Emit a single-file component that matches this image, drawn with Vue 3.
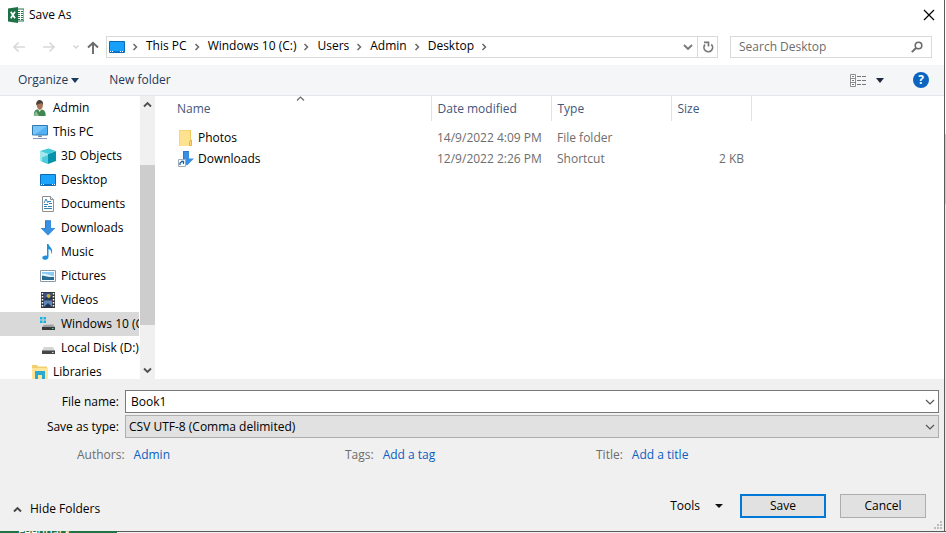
<script setup>
import { ref } from 'vue'

const crumbs = ['This PC', 'Windows 10 (C:)', 'Users', 'Admin', 'Desktop']

const tree = [
  { label: 'Admin', icon: 'user', root: true },
  { label: 'This PC', icon: 'pc', root: true },
  { label: '3D Objects', icon: 'cube' },
  { label: 'Desktop', icon: 'desktop' },
  { label: 'Documents', icon: 'document' },
  { label: 'Downloads', icon: 'download' },
  { label: 'Music', icon: 'music' },
  { label: 'Pictures', icon: 'picture' },
  { label: 'Videos', icon: 'video' },
  { label: 'Windows 10 (C:)', icon: 'system' },
  { label: 'Local Disk (D:)', icon: 'disk' },
  { label: 'Libraries', icon: 'library', root: true },
]
const selected = ref('Windows 10 (C:)')

const files = [
  { name: 'Photos', icon: 'folder', date: '14/9/2022 4:09 PM', type: 'File folder', size: '' },
  { name: 'Downloads', icon: 'shortcut', date: '12/9/2022 2:26 PM', type: 'Shortcut', size: '2 KB' },
]

const search = ref('')
const fileName = ref('Book1')
const fileType = ref('csv')
</script>

<template>
  <div class="screen">
    <main class="dialog">
      <header class="titlebar">
        <svg class="app-icon" width="16" height="16" viewBox="0 0 16 16">
          <path d="M9 2h7v12H9z" fill="#fff" stroke="#217346" />
          <path d="M10 4.500h2M13 4.500h2M10 6.500h2M13 6.500h2M10 8.500h2M13 8.500h2M10 10.500h2M13 10.500h2M10 12.500h2M13 12.500h2" stroke="#217346" />
          <path d="M0 1.500 10 0v16L0 14.500z" fill="#1e7145" />
          <path d="M2.800 4.800 7 11.300M7 4.600 2.800 11.300" stroke="#fff" stroke-width="1.700" />
        </svg>
        <h1>Save As</h1>
        <button class="close" aria-label="Close">
          <svg width="12" height="12" viewBox="0 0 12 12"><path d="M1 1l10 10M11 1 1 11" stroke="#000" stroke-width="1.200" /></svg>
        </button>
      </header>

      <div class="navbar">
        <div class="history">
          <button aria-label="Back" disabled>
            <svg width="14" height="12" viewBox="0 0 14 12"><path d="M13 6H2M6.500 1.500 2 6l4.500 4.500" fill="none" stroke="#d9d9d9" stroke-width="1.700" /></svg>
          </button>
          <button aria-label="Forward" disabled>
            <svg width="14" height="12" viewBox="0 0 14 12"><path d="M1 6h11M7.500 1.500 12 6l-4.500 4.500" fill="none" stroke="#d9d9d9" stroke-width="1.700" /></svg>
          </button>
          <button class="recent" aria-label="Recent locations" disabled>
            <svg width="8" height="6" viewBox="0 0 8 6"><path d="M1.500 1.500 4 4l2.500-2.500" fill="none" stroke="#d4d4d4" stroke-width="1.500" /></svg>
          </button>
          <button class="up" aria-label="Up">
            <svg width="12" height="13" viewBox="0 0 12 13"><path d="M6 13V2M1 6.500 6 1.700l5 4.800" fill="none" stroke="#6a6a6a" stroke-width="1.900" /></svg>
          </button>
        </div>
        <nav class="address" aria-label="Address">
          <svg class="place" width="16" height="12" viewBox="0 0 16 12">
            <path d="M.5.5h15v11H.5z" fill="#18a1fb" stroke="#0a6cb9" />
            <path d="M1 10.500h14" stroke="#0b79cf" />
            <path d="M1 10.500h1M3 10.500h1M11 10.500h1M13 10.500h1" stroke="#fff" />
          </svg>
          <svg class="sep" width="6" height="8" viewBox="0 0 6 8"><path d="M1.500 1 4.500 4l-3 3" fill="none" stroke="#6a6a6a" stroke-width="1.500" /></svg>
          <template v-for="c in crumbs" :key="c">
            <button class="crumb">{{ c }}</button>
            <svg class="sep" width="6" height="8" viewBox="0 0 6 8"><path d="M1.500 1 4.500 4l-3 3" fill="none" stroke="#6a6a6a" stroke-width="1.500" /></svg>
          </template>
          <button class="expand" aria-label="Previous locations">
            <svg width="10" height="7" viewBox="0 0 10 7"><path d="M1 1l4 4 4-4" fill="none" stroke="#777" stroke-width="1.900" /></svg>
          </button>
          <button class="refresh" aria-label="Refresh">
            <svg width="12" height="12" viewBox="0 0 12 12">
              <path d="M9.300 3.300A4.300 4.300 0 1 1 3 3.600" fill="none" stroke="#777" stroke-width="1.700" />
              <path d="M2 1.300h4.500v4.200" fill="none" stroke="#777" stroke-width="1.700" />
            </svg>
          </button>
        </nav>
        <label class="search">
          <input v-model="search" type="text" placeholder="Search Desktop" aria-label="Search Desktop" />
          <svg width="12" height="12" viewBox="0 0 12 12">
            <circle cx="7.500" cy="4.500" r="3.300" fill="none" stroke="#6a6a6a" stroke-width="1.600" />
            <path d="M5 7 .8 11.200" stroke="#6a6a6a" stroke-width="1.900" />
          </svg>
        </label>
      </div>

      <div class="toolbar">
        <button class="organize">Organize
          <svg width="8" height="5" viewBox="0 0 8 5"><path d="M0 0h8L4 5z" fill="#1e395b" /></svg>
        </button>
        <button>New folder</button>
        <button class="views" aria-label="Change your view">
          <svg width="17" height="13" viewBox="0 0 17 13">
            <path d="M.5.5h5v12h-5zM.5 4.500h5M.5 8.500h5" fill="#fff" stroke="#8c8c8c" />
            <path d="M2 2.500h2M2 6.500h2M2 10.500h2" stroke="#777" />
            <path d="M7 2.500h4M12 2.500h4M7 6.500h4M12 6.500h4M7 10.500h4M12 10.500h4" stroke="#777" />
          </svg>
          <svg width="8" height="5" viewBox="0 0 8 5"><path d="M0 0h8L4 5z" fill="#1e2a3d" /></svg>
        </button>
        <button class="help" aria-label="Help">?</button>
      </div>

      <div class="browser">
        <ul class="tree">
          <li v-for="n in tree" :key="n.label">
            <button class="node" :class="{ root: n.root, selected: n.label === selected }" @click="selected = n.label">
              <svg width="16" height="16" viewBox="0 0 16 16">
                <template v-if="n.icon === 'user'">
                  <path d="M2 16c-.5-3 .5-6 3-6.500h5c2.500.5 4 3 3.500 6.500z" fill="#3f8651" />
                  <path d="M2 16c0-2 .8-4 2.500-4.800L7 16z" fill="#8db795" />
                  <path d="m6 9 1.500 3L10 9z" fill="#f5e5d8" />
                  <path d="M4.500 3.500C5 .8 10 .5 10.800 3.500c.5 3-.8 6-3 6.300-2.300-.3-3.300-3.500-3.300-6.300z" fill="#a97358" />
                  <path d="M4.300 5C4 1.500 6 0 7.800.1c2.500.1 3.500 2 3.200 4.700L9.500 3z" fill="#4b4038" />
                </template>
                <template v-else-if="n.icon === 'pc'">
                  <path d="M.5 1.500h15v9.500H.5z" fill="#50b2f5" stroke="#3178af" />
                  <path d="M1 2h14L3 10.500H1z" fill="#78c5f8" />
                  <path d="M6 11.500h4v1.500H6z" fill="#7c8da1" />
                  <path d="M1 14.500h14" stroke="#8996bb" />
                </template>
                <template v-else-if="n.icon === 'cube'">
                  <path d="M0 3 8 6v10L0 13z" fill="#a4e7ec" />
                  <path d="M8 6l8-3V13l-8 3z" fill="#0793ac" />
                  <path d="M0 3 8.500.5 16 3 8 6z" fill="#42cbd9" />
                  <path d="M2 9.500 8 7v9l-6-2.300z" fill="#4fcbdc" />
                </template>
                <template v-else-if="n.icon === 'desktop'">
                  <path d="M.5 2.500h15v11H.5z" fill="#1ba4fc" stroke="#0a6cb9" />
                  <path d="M1 12.500h14" stroke="#0b70c0" />
                  <path d="M1 12.500h1M3 12.500h1M12 12.500h1M14 12.500h1" stroke="#fff" />
                </template>
                <template v-else-if="n.icon === 'document'">
                  <path d="M2.500.5h8l3 3v12h-11z" fill="#fff" stroke="#8a8f94" />
                  <path d="M10.500.5v3h3" fill="#e5e5e5" stroke="#8a8f94" />
                  <path d="M4 7 6 3l2 4M8 5.500h3M4 8.500h4M9 7.500h3M4 10.500h3M8 10.500h4M4 12.500h8" fill="none" stroke="#3583b5" />
                </template>
                <template v-else-if="n.icon === 'download'">
                  <path d="M5 .5h6V8h4.500L8 15.500.5 8H5z" fill="#3990e3" />
                  <path d="M5 .5h6v1H6v7H2.500L.5 8H5z" fill="#287bcb" />
                </template>
                <template v-else-if="n.icon === 'music'">
                  <path d="M7 0h1.500c.5 3 4.500 4 3.500 8.500-.3 1-.8 1.500-1 1.500 1-3-.8-4.500-2.500-5V13c0 2-2 3-4 2.800C2 15.500 1.500 13 3.500 12c1.200-.7 2.500-.7 3.500-.3z" fill="#1c8fdd" />
                </template>
                <template v-else-if="n.icon === 'picture'">
                  <path d="M.5 2.500h15v11H.5z" fill="#fff" stroke="#8a9aa8" />
                  <path d="M2 4h12v8H2z" fill="#8cc9f3" />
                  <path d="M2 6c4-1 7 2 12 2v1H2z" fill="#e4f4fd" />
                  <path d="M2 7.500c4 .5 7 2 12 1.500v3H2z" fill="#286a91" />
                </template>
                <template v-else-if="n.icon === 'video'">
                  <path d="M1 0h14v16H1z" fill="#34363a" />
                  <path d="M2.500 1v15M13.500 1v15" stroke="#fff" stroke-width="1.500" stroke-dasharray="1.500" />
                  <path d="M4 1h8v6.500H4z" fill="#394e8a" />
                  <path d="M4 8.500h8V15H4z" fill="#5c86b9" />
                  <circle cx="8.500" cy="4" r="2" fill="#c5b32e" />
                  <path d="M4 7.500 7 5l2 2 3-3v3.500zM4 15l4-4 4 4z" fill="#1e3254" />
                </template>
                <template v-else-if="n.icon === 'system'">
                  <path d="M0 1h2.500v2.500H0zM3.500 1H6v2.500H3.500zM0 4.500h2.500V7H0zM3.500 4.500H6V7H3.500z" fill="#16b3e0" />
                  <path d="m4 9 9-.5 2 2.500H2z" fill="#9da0a2" />
                  <path d="M2 11h13v3H2z" fill="#383b3d" />
                  <path d="M12 12.500h1.500" stroke="#56df79" />
                </template>
                <template v-else-if="n.icon === 'disk'">
                  <path d="M4 7h9l2 4H2z" fill="#d3d5d6" />
                  <path d="M2 10.500h13V14H2z" fill="#444749" />
                  <path d="M12 12.500h1.500" stroke="#d5dfd6" />
                </template>
                <template v-else>
                  <path d="M0 1h5l1 1.500h9V15H0z" fill="#f1cf6e" />
                  <path d="M0 4h16v11H0z" fill="#ffe49a" />
                  <path d="M3 7h10v9h-3v-5H6v5H3z" fill="#29a9cf" />
                </template>
              </svg>
              <span>{{ n.label }}</span>
            </button>
          </li>
        </ul>
        <div class="scrollbar">
          <button aria-label="Scroll up">
            <svg width="9" height="7" viewBox="0 0 9 7"><path d="M1 5.500 4.500 2 8 5.500" fill="none" stroke="#505050" stroke-width="1.900" /></svg>
          </button>
          <div class="track"><div class="thumb"></div></div>
          <button aria-label="Scroll down">
            <svg width="9" height="7" viewBox="0 0 9 7"><path d="M1 1.500 4.500 5 8 1.500" fill="none" stroke="#505050" stroke-width="1.900" /></svg>
          </button>
        </div>
        <section class="files">
          <table>
            <colgroup>
              <col class="c-name" /><col class="c-std" /><col class="c-std" /><col class="c-size" />
            </colgroup>
            <thead>
              <tr>
                <th scope="col">Name
                  <svg class="sort" width="9" height="5" viewBox="0 0 9 5"><path d="M1 4.500 4.500 1 8 4.500" fill="none" stroke="#6a6a6a" stroke-width="1.200" /></svg>
                </th>
                <th scope="col">Date modified</th>
                <th scope="col">Type</th>
                <th scope="col">Size</th>
              </tr>
            </thead>
            <tbody>
              <tr v-for="f in files" :key="f.name">
                <td class="name">
                  <div class="file">
                    <svg width="16" height="16" viewBox="0 0 16 16">
                      <template v-if="f.icon === 'folder'">
                        <path d="M1 0h12v16H1z" fill="#efc85c" />
                        <path d="M1.500.5H12V13l-1 3H1.500z" fill="#ffe290" />
                        <path d="M11.500 11.500 13.500 10v5.500h-2z" fill="#fcd876" stroke="#dfb847" />
                      </template>
                      <template v-else>
                        <path d="M5 0h6v7.500h5L9 14.500 5 11z" fill="#3990e3" />
                        <path d="M5 0h6v1H6v7H5z" fill="#287bcb" />
                        <path d="M.5 8.500h7v7h-7z" fill="#fff" stroke="#9eabb8" />
                        <path d="M2 14V12l2.500-2M3 10.500h2.500V13" fill="none" stroke="#1e669f" stroke-width="1.300" />
                      </template>
                    </svg>
                    {{ f.name }}
                  </div>
                </td>
                <td>{{ f.date }}</td>
                <td>{{ f.type }}</td>
                <td class="size">{{ f.size }}</td>
              </tr>
            </tbody>
          </table>
        </section>
      </div>

      <form class="details" @submit.prevent>
        <div class="field">
          <label for="file-name">File name:</label>
          <div class="combo">
            <input id="file-name" v-model="fileName" type="text" />
            <svg width="10" height="6" viewBox="0 0 10 6"><path d="M1 1l4 4 4-4" fill="none" stroke="#555" stroke-width="1.200" /></svg>
          </div>
        </div>
        <div class="field">
          <label for="file-type">Save as type:</label>
          <div class="combo">
            <select id="file-type" v-model="fileType">
              <option value="csv">CSV UTF-8 (Comma delimited)</option>
            </select>
            <svg width="10" height="6" viewBox="0 0 10 6"><path d="M1 1l4 4 4-4" fill="none" stroke="#555" stroke-width="1.200" /></svg>
          </div>
        </div>
        <dl class="meta">
          <div><dt>Authors:</dt><dd><a href="#authors">Admin</a></dd></div>
          <div><dt>Tags:</dt><dd><a href="#tags">Add a tag</a></dd></div>
          <div><dt>Title:</dt><dd><a href="#title">Add a title</a></dd></div>
        </dl>
        <div class="actions">
          <button type="button" class="hide">
            <svg width="9" height="7" viewBox="0 0 9 7"><path d="M1 5.500 4.500 2 8 5.500" fill="none" stroke="#444" stroke-width="1.900" /></svg>
            Hide Folders
          </button>
          <button type="button" class="tools">Tools
            <svg width="8" height="4" viewBox="0 0 8 4"><path d="M0 0h8L4 4z" fill="#111" /></svg>
          </button>
          <button type="submit" class="push primary">Save</button>
          <button type="button" class="push">Cancel</button>
        </div>
        <svg class="grip" width="9" height="9" viewBox="0 0 9 9">
          <path d="M7 0h2v2H7zM7 3h2v2H7zM4 3h2v2H4zM7 6h2v2H7zM4 6h2v2H4zM1 6h2v2H1z" fill="#bcbcbc" />
        </svg>
      </form>
    </main>
    <div class="behind"><span class="feedback">Feedback</span></div>
  </div>
</template>

<style>
body { background: #fff; }
</style>

<style scoped>
.screen {
  display: flex;
  flex-direction: column;
  height: 100vh;
  min-height: 420px;
  overflow: hidden;
  font-family: "Open Sans", "Noto Sans", sans-serif;
  font-size: 12px;
  line-height: 16px;
  color: #000;
  background: linear-gradient(#fff 134px, #f2c94c 134px, #f2c94c 204px, #e6e6e6 204px);
}
.screen *, .screen { box-sizing: border-box; }
button, input, select {
  font: inherit;
  color: inherit;
  margin: 0;
  padding: 0;
  border: 0;
  border-radius: 0;
  background: none;
}
svg { display: block; flex: none; }
.dialog {
  flex: 1;
  min-height: 0;
  display: flex;
  flex-direction: column;
  margin-right: 1px;
  border-right: 1px solid #5b5b5b;
  background: #fff;
}
.titlebar {
  display: flex;
  align-items: center;
  height: 29px;
  padding: 0 9px 0 8px;
  gap: 5px;
}
h1 { margin: 0; flex: 1; font-size: 12px; font-weight: 400; }
.close { display: flex; }

.navbar {
  display: flex;
  align-items: center;
  padding: 7px 12px 7px 12px;
}
.history { display: flex; align-items: center; width: 94px; }
.history button { display: flex; width: 30px; }
.history .recent { width: 19px; padding-left: 4px; margin-left: -4px; }
.history .up { width: 12px; }
.address {
  flex: 1;
  display: flex;
  align-items: center;
  height: 22px;
  border: 1px solid #d9d9d9;
}
.place { margin: 0 7px 0 2px; }
.crumb { padding: 0 7px 2px 8px; height: 20px; white-space: nowrap; }
.expand { margin-left: auto; padding: 0 4px; }
.refresh {
  display: flex;
  align-items: center;
  justify-content: center;
  align-self: stretch;
  width: 20px;
  border-left: 1px solid #d9d9d9;
}
.search {
  display: flex;
  align-items: center;
  width: 202px;
  height: 22px;
  margin-left: 12px;
  padding: 0 8px;
  border: 1px solid #d9d9d9;
}
.search input { flex: 1; min-width: 0; outline: none; }
.search input::placeholder { color: #6d6d6d; opacity: 1; }

.toolbar {
  display: flex;
  align-items: center;
  height: 31px;
  padding: 0 15px 0 18px;
  background: #f5f6f7;
  border-bottom: 1px solid #e3e8ee;
  color: #1e395b;
}
.toolbar .organize { margin-right: 30px; }
.organize, .views { display: flex; align-items: center; gap: 3px; }
.views { margin-left: auto; margin-right: 29px; gap: 9px; }
.help {
  width: 16px;
  height: 16px;
  border-radius: 50%;
  background: #0b64c0;
  color: #fff;
  font-weight: 700;
}

.browser { flex: 1; min-height: 0; display: flex; }
.tree {
  width: 139px;
  margin: 0;
  padding: 0;
  list-style: none;
  overflow: hidden;
}
.node {
  display: flex;
  align-items: center;
  gap: 5px;
  width: 100%;
  height: 24px;
  padding-left: 40px;
  overflow: hidden;
  white-space: nowrap;
}
.node.root { padding-left: 32px; }
.node.selected { background: #d9d9d9; }
.scrollbar {
  display: flex;
  flex-direction: column;
  width: 15px;
  margin-left: 1px;
  background: #f0f0f0;
}
.scrollbar button { display: flex; align-items: center; justify-content: center; height: 17px; }
.track { flex: 1; padding-top: 52px; }
.thumb { height: 81%; background: #cdcdcd; }

.files { flex: 1; padding-left: 16px; overflow: hidden; }
table { border-collapse: collapse; table-layout: fixed; width: 580px; }
.c-name { width: 260px; }
.c-std { width: 120px; }
.c-size { width: 80px; }
th {
  position: relative;
  height: 25px;
  padding: 0 6px;
  border-right: 1px solid #e2e2e2;
  color: #43577b;
  font-weight: 400;
  text-align: left;
}
.sort { position: absolute; top: 0; left: 48%; }
tbody::before { content: ""; display: block; height: 6px; }
td { height: 21px; padding: 0 7px 0 6px; color: #6d6d6d; white-space: nowrap; }
td.name { padding-left: 7px; color: #000; }
td.size { text-align: right; }
.file { display: flex; align-items: center; gap: 4px; }

.details {
  position: relative;
  padding: 11px 5px 13px 13px;
  background: #f0f0f0;
}
.field { display: flex; align-items: center; margin-bottom: 2px; }
.field label { width: 112px; padding-right: 6px; text-align: right; white-space: nowrap; }
.combo { position: relative; flex: 1; }
.combo input, .combo select {
  display: block;
  width: 100%;
  height: 23px;
  border: 1px solid #7a7a7a;
  background: #fff;
  padding: 0 20px 0 5px;
}
.combo select {
  appearance: none;
  padding-left: 3px;
  border-color: #adadad;
  background: #e1e1e1;
}
.combo svg { position: absolute; right: 4px; top: 9px; pointer-events: none; }
.meta {
  display: grid;
  grid-template-columns: 268px 251px 1fr;
  margin: 9px 0 0 64px;
}
.meta div { display: flex; gap: 9px; }
dt { color: #6d6d6d; }
dd { margin: 0; }
a { color: #0a5fc0; text-decoration: none; }
.actions { display: flex; align-items: center; margin-top: 31px; padding-right: 13px; }
.hide { display: flex; align-items: center; gap: 8px; margin-right: auto; padding-top: 6px; }
.tools { display: flex; align-items: center; gap: 15px; margin-right: 17px; }
.push {
  width: 86px;
  height: 24px;
  border: 1px solid #adadad;
  background: #e1e1e1;
}
.push.primary { margin-right: 14px; border: 2px solid #0078d7; }
.grip { position: absolute; right: 2px; bottom: 1px; }

.behind {
  height: 2px;
  overflow: hidden;
  background: linear-gradient(#5b5b5b 1px, #f0f0f0 1px);
}
.feedback {
  display: block;
  width: 117px;
  padding-left: 18px;
  background: #217346;
  color: #fff;
  line-height: 2px;
}
</style>
